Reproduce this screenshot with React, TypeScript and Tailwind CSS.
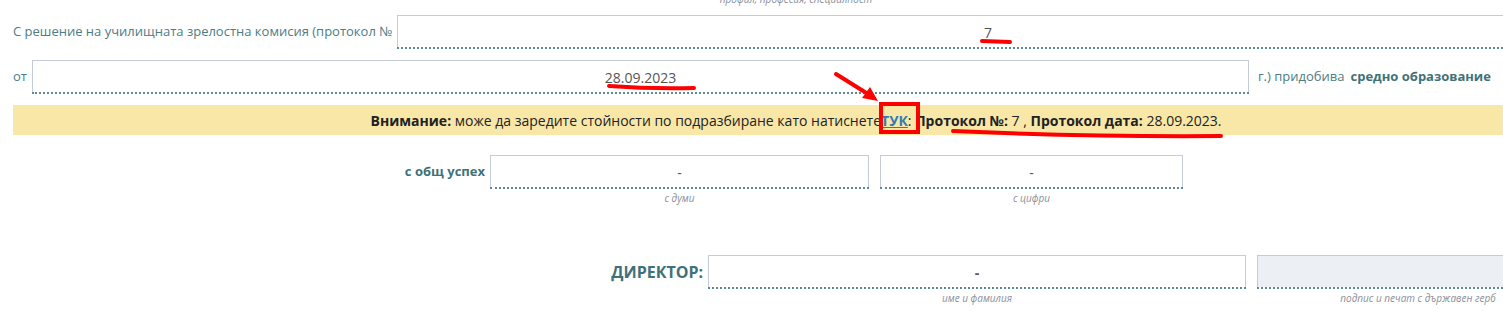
import React from "react";

function Field({ className = "", children }: { className?: string; children?: React.ReactNode }) {
  return (
    <div>
      <div className={`h-[32px] pt-[2px] border-x border-t border-[#c5ccd9] flex items-center justify-center text-[14px] text-[#555] ${className}`}>
        {children}
      </div>
      <div className="border-t-2 border-dotted border-[#5b8a90]" />
    </div>
  );
}

function Caption({ children }: { children: React.ReactNode }) {
  return <div className="text-center text-[10px] italic leading-[14px] text-[#8a8f99] mt-[2px]">{children}</div>;
}

export default function App() {
  return (
    <div className="w-[1503px] h-[311px] overflow-hidden bg-white" style={{ fontFamily: '"Open Sans", sans-serif' }}>
      <div className="relative w-[1592px] px-[13px]">
        {/* cut-off caption from the row above */}
        <div className="h-[15px] flex flex-col">
          <p className="-mt-[7px] text-center text-[10px] italic leading-[12px] text-[#8a8f99]">профил, професия, специалност</p>
        </div>

        {/* Protocol number */}
        <div className="flex items-center">
          <label className="w-[384px] shrink-0 text-[13px] text-[#4b7d86]">С решение на училищната зрелостна комисия (протокол №</label>
          <div className="flex-1">
            <Field>7</Field>
          </div>
        </div>

        {/* Date */}
        <div className="flex items-center mt-[11px]">
          <label className="w-[19px] shrink-0 text-[13px] text-[#4b7d86]">от</label>
          <div className="w-[1217px] shrink-0">
            <Field>28.09.2023</Field>
          </div>
          <span className="ml-[9px] text-[13px] text-[#4b7d86]">г.) придобива</span>
          <span className="ml-[6px] text-[13px] font-bold text-[#3f7278]">средно образование</span>
        </div>

        {/* Notice banner */}
        <div className="mt-[11px] h-[30px] bg-[#f9e7a8] flex items-center justify-center text-[14px] text-[#222]">
          <span>
            <b>Внимание:</b> може да заредите стойности по подразбиране като натиснете
            <a className="font-bold text-[#337ab7] underline">ТУК</a>: <b>Протокол №:</b> 7 , <b>Протокол дата:</b> 28.09.2023.
          </span>
        </div>

        {/* General grade */}
        <div className="flex mt-[20px]">
          <div className="w-[472px] shrink-0 h-[34px] flex items-center justify-end text-[13px] font-bold text-[#3f7278]">с общ успех</div>
          <div className="w-[379px] shrink-0 ml-[5px]">
            <Field>-</Field>
            <Caption>с думи</Caption>
          </div>
          <div className="w-[303px] shrink-0 ml-[11px]">
            <Field>-</Field>
            <Caption>с цифри</Caption>
          </div>
        </div>

        {/* Director */}
        <div className="flex mt-[50px]">
          <div className="w-[690px] shrink-0 h-[34px] flex items-center justify-end text-[16px] font-bold text-[#3f7278]">ДИРЕКТОР:</div>
          <div className="w-[538px] shrink-0 ml-[5px]">
            <Field className="font-bold text-[#222]">-</Field>
            <Caption>име и фамилия</Caption>
          </div>
          <div className="w-[322px] shrink-0 ml-[11px]">
            <Field className="bg-[#eceff4]" />
            <Caption>подпис и печат с държавен герб</Caption>
          </div>
        </div>

        {/* red annotations drawn over the form */}
        <svg className="absolute left-0 top-0 pointer-events-none" width="1503" height="311">
          <g stroke="#f00" strokeWidth="4" fill="none" strokeLinecap="round">
            <path d="M982 41 L1010 42" />
            <path d="M609 86 Q650 89 694 88" />
            <path d="M953 131 Q1090 137 1221 136" />
            <rect x="881" y="104" width="37" height="28" strokeLinecap="butt" />
            <path d="M836 74 L868 94" />
          </g>
          <polygon points="878,101 862,98 870,87" fill="#f00" />
        </svg>
      </div>
    </div>
  );
}
